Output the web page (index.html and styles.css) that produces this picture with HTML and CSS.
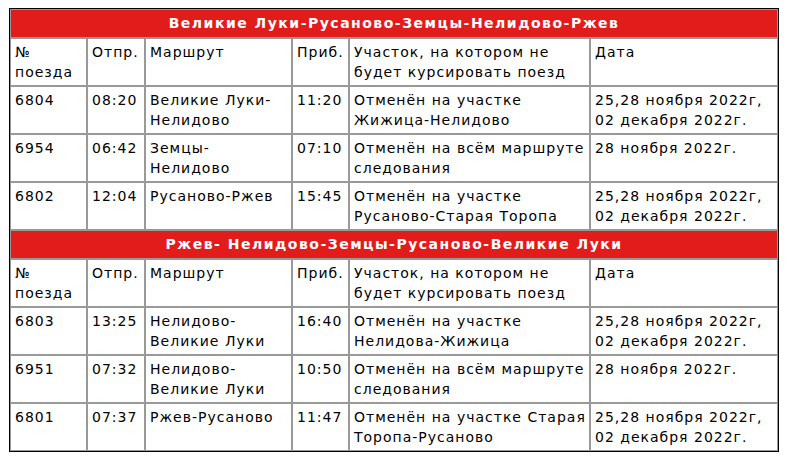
FILE: index.html
```html
<!DOCTYPE html>
<html lang="ru">
<head>
<meta charset="utf-8">
<title>Отмена поездов</title>
<link rel="stylesheet" href="styles.css">
</head>
<body>
<table class="sched">
  <colgroup>
    <col class="c-num"><col class="c-dep"><col class="c-route"><col class="c-arr"><col class="c-part"><col class="c-date">
  </colgroup>
  <tbody>
    <tr><td class="title" colspan="6">Великие Луки-Русаново-Земцы-Нелидово-Ржев</td></tr>
    <tr><td>№<br>поезда</td><td>Отпр.</td><td>Маршрут</td><td>Приб.</td><td>Участок, на котором не<br>будет курсировать поезд</td><td>Дата</td></tr>
    <tr><td>6804</td><td>08:20</td><td>Великие Луки-<br>Нелидово</td><td>11:20</td><td>Отменён на участке<br>Жижица-Нелидово</td><td>25,28 ноября 2022г,<br>02 декабря 2022г.</td></tr>
    <tr><td>6954</td><td>06:42</td><td>Земцы-<br>Нелидово</td><td>07:10</td><td>Отменён на всём маршруте<br>следования</td><td>28 ноября 2022г.</td></tr>
    <tr><td>6802</td><td>12:04</td><td>Русаново-Ржев</td><td>15:45</td><td>Отменён на участке<br>Русаново-Старая Торопа</td><td>25,28 ноября 2022г,<br>02 декабря 2022г.</td></tr>
    <tr><td class="title" colspan="6">Ржев- Нелидово-Земцы-Русаново-Великие Луки</td></tr>
    <tr><td>№<br>поезда</td><td>Отпр.</td><td>Маршрут</td><td>Приб.</td><td>Участок, на котором не<br>будет курсировать поезд</td><td>Дата</td></tr>
    <tr><td>6803</td><td>13:25</td><td>Нелидово-<br>Великие Луки</td><td>16:40</td><td>Отменён на участке<br>Нелидова-Жижица</td><td>25,28 ноября 2022г,<br>02 декабря 2022г.</td></tr>
    <tr><td>6951</td><td>07:32</td><td>Нелидово-<br>Великие Луки</td><td>10:50</td><td>Отменён на всём маршруте<br>следования</td><td>28 ноября 2022г.</td></tr>
    <tr><td>6801</td><td>07:37</td><td>Ржев-Русаново</td><td>11:47</td><td>Отменён на участке Старая<br>Торопа-Русаново</td><td>25,28 ноября 2022г,<br>02 декабря 2022г.</td></tr>
  </tbody>
</table>
</body>
</html>
```
FILE: styles.css
```css
html, body {
  margin: 0;
  padding: 0;
  background: #fff;
}
body {
  padding: 8px 0 0 9px;
  font-family: "DejaVu Sans", Verdana, sans-serif;
  font-size: 14px;
  line-height: 20px;
  letter-spacing: 1px;
  color: #000;
}
.sched {
  width: 770px;
  table-layout: fixed;
  border-collapse: separate;
  border-spacing: 0;
  border: 1px solid #000;
}
.c-num { width: 77px; }
.c-dep { width: 58px; }
.c-route { width: 147px; }
.c-arr { width: 57px; }
.c-part { width: 241px; }
.c-date { width: 188px; }
.sched td {
  box-sizing: border-box;
  border: 1px solid #999;
  padding: 3px 4px;
  vertical-align: top;
  white-space: nowrap;
}
.sched td.title {
  background: #e21b1b;
  color: #fff;
  font-weight: bold;
  letter-spacing: 1.5px;
  text-align: center;
  padding: 3px 4px 4px;
}
```
